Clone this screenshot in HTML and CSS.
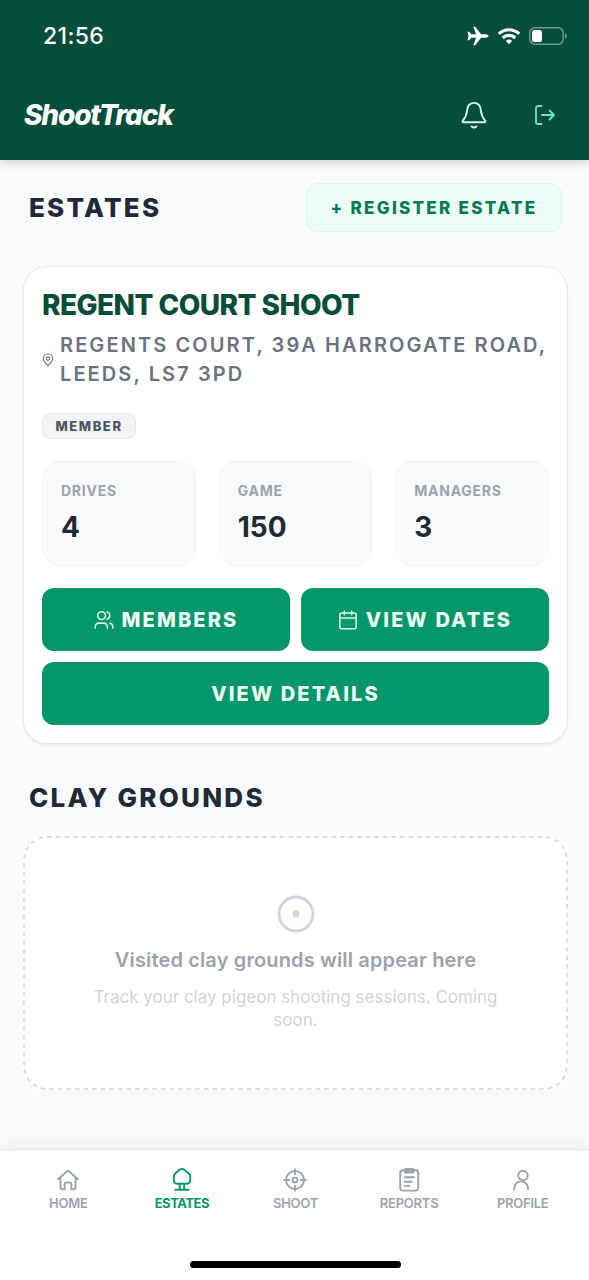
FILE: index.html
```html
<!DOCTYPE html>
<html lang="en">
<head>
<meta charset="utf-8">
<title>ShootTrack</title>
<link rel="stylesheet" href="styles.css">
</head>
<body>
<header class="top">
  <div class="status">
    <span class="time">21:56</span>
    <div class="status-icons">
      <svg class="plane" width="22" height="20" viewBox="0 0 22 20" fill="#fff"><path d="M21.5 10c0-1-1.6-1.7-3-1.7h-4.3L8.6 1.3c-.3-.4-.6-.5-1-.5H6.2l2.9 7.5H4.2L2.3 5.7H.5l1 4.3-1 4.3h1.8l1.9-2.6h4.9l-2.9 7.5h1.4c.4 0 .7-.1 1-.5l5.6-7h4.3c1.4 0 3-.7 3-1.700z"/></svg>
      <svg class="wifi" width="24" height="18" viewBox="0 0 24 18" fill="none" stroke="#fff" stroke-width="3.2"><path d="M1.8 6.9a14.6 14.6 0 0 1 20.4 0M5.7 11a9 9 0 0 1 12.6 0"/><path d="M12 17.2l-3.2-3.3a4.6 4.6 0 0 1 6.4 0z" fill="#fff" stroke="none"/></svg>
      <svg class="battery" width="39" height="18" viewBox="0 0 39 18" fill="none"><rect x=".8" y=".8" width="33.4" height="16.4" rx="5" stroke="#739c8e" stroke-width="1.4"/><rect x="3" y="3" width="10" height="12" rx="2.6" fill="#fff"/><path d="M36 6.2c2.4.9 2.4 4.7 0 5.6z" fill="#739c8e"/></svg>
    </div>
  </div>
  <div class="appbar">
    <h1 class="brand">ShootTrack</h1>
    <div class="actions">
      <svg width="28" height="28" viewBox="0 0 28 28" fill="none" stroke="#d1fae5" stroke-width="1.9" stroke-linecap="round" stroke-linejoin="round"><path d="M3.300 21.300h21.400c.8 0 1.100-.9.600-1.600-2.200-2.500-3.800-4.200-4.200-9.200C20.700 5 18 1.900 14 1.900S7.300 5 6.900 10.500c-.4 5-2 6.700-4.200 9.200-.5.700-.2 1.600.6 1.600z"/><path d="M11.700 25.500c1.300 1.200 3.300 1.200 4.600 0"/></svg>
      <svg width="22" height="22" viewBox="0 0 22 22" fill="none" stroke="#6ee7b7" stroke-width="1.8" stroke-linecap="round" stroke-linejoin="round"><path d="M7.500 2H4a2 2 0 0 0-2 2v14a2 2 0 0 0 2 2h3.500M8 11h12M15.600 6.500L20 11l-4.400 4.500"/></svg>
    </div>
  </div>
</header>

<main class="content">
  <div class="section-head">
    <h2 class="section-title">Estates</h2>
    <button class="register">+ Register Estate</button>
  </div>

  <article class="card">
    <h3 class="card-title">Regent Court Shoot</h3>
    <div class="address">
      <svg width="12" height="14" viewBox="0 0 12 14" fill="none" stroke="#6b7280" stroke-width="1.1"><path d="M6 12.600C4 10.900 1.400 8.400 1.400 5.600a4.600 4.600 0 0 1 9.200 0c0 2.800-2.600 5.300-4.600 7z"/><circle cx="6" cy="5.600" r="1.700"/></svg>
      <p class="address-text">Regents Court, 39A Harrogate Road,<br>Leeds, LS7 3PD</p>
    </div>
    <span class="badge">Member</span>
    <div class="stats">
      <div class="stat"><span class="stat-label">Drives</span><span class="stat-value">4</span></div>
      <div class="stat"><span class="stat-label">Game</span><span class="stat-value">150</span></div>
      <div class="stat"><span class="stat-label">Managers</span><span class="stat-value">3</span></div>
    </div>
    <div class="buttons">
      <button class="btn"><svg width="20" height="20" viewBox="0 0 20 20" fill="none" stroke="#d1fae5" stroke-width="1.600" stroke-linecap="round" stroke-linejoin="round"><path d="M1.200 18.300v-1.600a3.600 3.600 0 0 1 3.600-3.600h4.900a3.600 3.600 0 0 1 3.600 3.600v1.600"/><circle cx="7.600" cy="5.600" r="3.900"/><path d="M15.800 13.200a3.600 3.600 0 0 1 3 3.500v1.600M13.200 1.900a3.900 3.900 0 0 1 0 7.400"/></svg>Members</button>
      <button class="btn"><svg width="20" height="20" viewBox="0 0 20 20" fill="none" stroke="#d1fae5" stroke-width="1.600" stroke-linecap="round" stroke-linejoin="round"><rect x="1.800" y="3" width="16.400" height="15.800" rx="2"/><path d="M6.300 1.200v3.600M13.700 1.200v3.600M1.800 8h16.400"/></svg>View Dates</button>
      <button class="btn wide">View Details</button>
    </div>
  </article>

  <h2 class="section-title clay-title">Clay Grounds</h2>
  <section class="empty">
    <svg class="dashes" width="545" height="254"><rect x="1" y="1" width="543" height="252" rx="23.500" fill="none" stroke="#d1d5db" stroke-width="1.500" stroke-dasharray="4.600 4"/></svg>
    <svg width="38" height="38" viewBox="0 0 38 38"><circle cx="19" cy="19" r="17" fill="none" stroke="#d1d5db" stroke-width="3"/><circle cx="19" cy="19" r="3.400" fill="#d1d5db"/></svg>
    <p class="empty-title">Visited clay grounds will appear here</p>
    <p class="empty-text">Track your clay pigeon shooting sessions. Coming<br>soon.</p>
  </section>
</main>

<nav class="tabbar">
  <div class="tabs">
    <a class="tab"><svg width="26" height="26" viewBox="0 0 26 26"><path d="M3 12.300L13 3.500l10 8.800M5.500 10.500v10a1.800 1.800 0 0 0 1.800 1.800h2.400v-5.300a1.500 1.500 0 0 1 1.500-1.500h3.600a1.500 1.500 0 0 1 1.500 1.500v5.300h2.400a1.800 1.800 0 0 0 1.800-1.800v-10"/></svg><span>Home</span></a>
    <a class="tab active"><svg width="26" height="26" viewBox="0 0 26 26"><path d="M9 16.800h8c2.400 0 4.200-1.400 4.200-3.800V9c0-1-.4-1.700-1.200-2.300l-4.300-3.600C13.800 1.600 12 1.600 10.200 3.100L6 6.700c-.8.600-1.200 1.300-1.200 2.300v4c0 2.400 1.800 3.800 4.200 3.800zM10.800 16.800v5.800M15.200 16.800v5.800M6.300 22.800h13.400"/></svg><span>Estates</span></a>
    <a class="tab"><svg width="26" height="26" viewBox="0 0 26 26"><circle cx="13" cy="13" r="9"/><circle cx="13" cy="13" r="2.400"/><path d="M13 2.200v5M13 18.800v5M2.200 13h5M18.800 13h5"/></svg><span>Shoot</span></a>
    <a class="tab"><svg width="26" height="26" viewBox="0 0 26 26"><rect x="4.200" y="3.200" width="18" height="20.400" rx="2.500"/><rect x="8.700" y="2" width="9" height="3.600" rx="1" fill="#9ca3af"/><path d="M8.700 10.300h9.200M8.700 14.700h7M8.700 18.900h4.500"/></svg><span>Reports</span></a>
    <a class="tab"><svg width="26" height="26" viewBox="0 0 26 26"><circle cx="13" cy="8.400" r="4.700"/><path d="M4.200 22.600v-1.300a6.900 6.900 0 0 1 13.800 0v1.300"/></svg><span>Profile</span></a>
  </div>
  <div class="home-indicator"></div>
</nav>
</body>
</html>
```
FILE: styles.css
```css
* { box-sizing: border-box; margin: 0; padding: 0; }
body {
  width: 589px; height: 1280px; overflow: hidden;
  display: flex; flex-direction: column;
  background: #f9fafb; color: #1f2937;
  font-family: Inter, "Liberation Sans", sans-serif;
}
svg { display: block; flex: none; }
button { font: inherit; border: 0; }
.top {
  height: 160px; flex: none; background: #064e3b;
  box-shadow: 0 3px 9px rgba(0,0,0,.16);
}
.status { height: 72px; display: flex; justify-content: space-between; padding: 0 21px 0 43px; align-items: center; }
.time { font-size: 23px; font-weight: 500; letter-spacing: .350px; color: #fff; line-height: 28px; }
.status-icons { display: flex; align-items: center; gap: 8px; }
.appbar { height: 86px; display: flex; align-items: center; justify-content: space-between; padding: 0 33px 0 24px; }
.brand { font-size: 28px; line-height: 36px; font-weight: 800; font-style: italic; letter-spacing: -1.150px; color: #fff; }
.actions { display: flex; align-items: center; gap: 46px; padding-bottom: 1px; }
.content { flex: 1; padding: 23px 21px 0 23px; }
.section-head { display: flex; justify-content: space-between; align-items: center; padding: 0 6px; height: 49px; }
.section-title { font-size: 26px; line-height: 36px; font-weight: 800; letter-spacing: 2.250px; text-transform: uppercase; }
.register {
  width: 256px; height: 49px; border: 1.500px solid #d1fae5; border-radius: 12px;
  background: #ecfdf5; color: #047857; font-size: 17px; font-weight: 800;
  letter-spacing: 2.300px; text-transform: uppercase; white-space: nowrap;
}
.card {
  height: 478px; margin-top: 34px; padding: 22px 18px 0;
  background: #fff; border: 1.500px solid #e5e7eb; border-radius: 24px;
  box-shadow: 0 2px 3px rgba(0,0,0,.05);
}
.card-title { font-size: 28px; line-height: 32px; font-weight: 800; letter-spacing: -.550px; color: #064e3b; text-transform: uppercase; white-space: nowrap; }
.address { display: flex; align-items: center; gap: 6px; margin-top: 10px; }
.address-text { font-size: 20px; line-height: 29px; font-weight: 600; letter-spacing: 2.100px; color: #6b7280; text-transform: uppercase; white-space: nowrap; }
.badge {
  display: flex; align-items: center; justify-content: center; width: 94px; height: 26px; margin-top: 24px;
  background: #f3f4f6; border: 1.500px solid #e5e7eb; border-radius: 8px;
  color: #4b5563; font-size: 13px; font-weight: 800; letter-spacing: 1.600px; text-transform: uppercase;
}
.stats { display: grid; grid-template-columns: repeat(3, 1fr); gap: 23px; margin-top: 22px; }
.stat { height: 105px; padding: 19px 18px; display: flex; flex-direction: column; gap: 9px; background: #f9fafb; border: 1.500px solid #f3f4f6; border-radius: 18px; }
.stat-label { font-size: 14px; line-height: 20px; font-weight: 700; letter-spacing: .750px; color: #9ca3af; text-transform: uppercase; }
.stat-value { font-size: 28px; line-height: 34px; font-weight: 700; letter-spacing: 0; }
.buttons { display: grid; grid-template-columns: 1fr 1fr; gap: 11px; margin-top: 22px; }
.btn {
  height: 63px; display: flex; align-items: center; justify-content: center; gap: 8px;
  background: #059669; border-radius: 12px; color: #ecfdf5;
  font-size: 20px; font-weight: 800; letter-spacing: 2.150px; text-transform: uppercase; white-space: nowrap;
}
.wide { grid-column: 1 / 3; }
.clay-title { margin: 36px 6px 0; }
.empty {
  position: relative; height: 254px; margin-top: 20px; display: flex; flex-direction: column; align-items: center; padding-top: 59px;
  background: #fff; border-radius: 24px; text-align: center; white-space: nowrap;
}
.dashes { position: absolute; inset: 0; }
.empty-title { margin-top: 12px; font-size: 20px; line-height: 30px; font-weight: 600; letter-spacing: .140px; color: #9ca3af; }
.empty-text { margin-top: 11px; font-size: 17px; line-height: 23px; color: #d1d5db; }
.tabbar { height: 131px; flex: none; background: #fff; border-top: 1px solid #e5e7eb; box-shadow: 0 -4px 15px rgba(0,0,0,.05); display: flex; flex-direction: column; align-items: center; padding-left: 2px; }
.tabs { display: grid; grid-template-columns: repeat(5, 1fr); width: 568px; padding-top: 17px; }
.tab { display: flex; flex-direction: column; align-items: center; gap: 2px; color: #9ca3af; font-size: 13px; line-height: 16px; font-weight: 600; letter-spacing: -.250px; text-transform: uppercase; }
.tab svg { fill: none; stroke: currentColor; stroke-width: 1.900; stroke-linecap: round; stroke-linejoin: round; }
.active { color: #059669; font-weight: 700; letter-spacing: -.450px; }
.home-indicator { width: 211px; height: 7px; margin-top: 50px; border-radius: 4px; background: #000; }
```
